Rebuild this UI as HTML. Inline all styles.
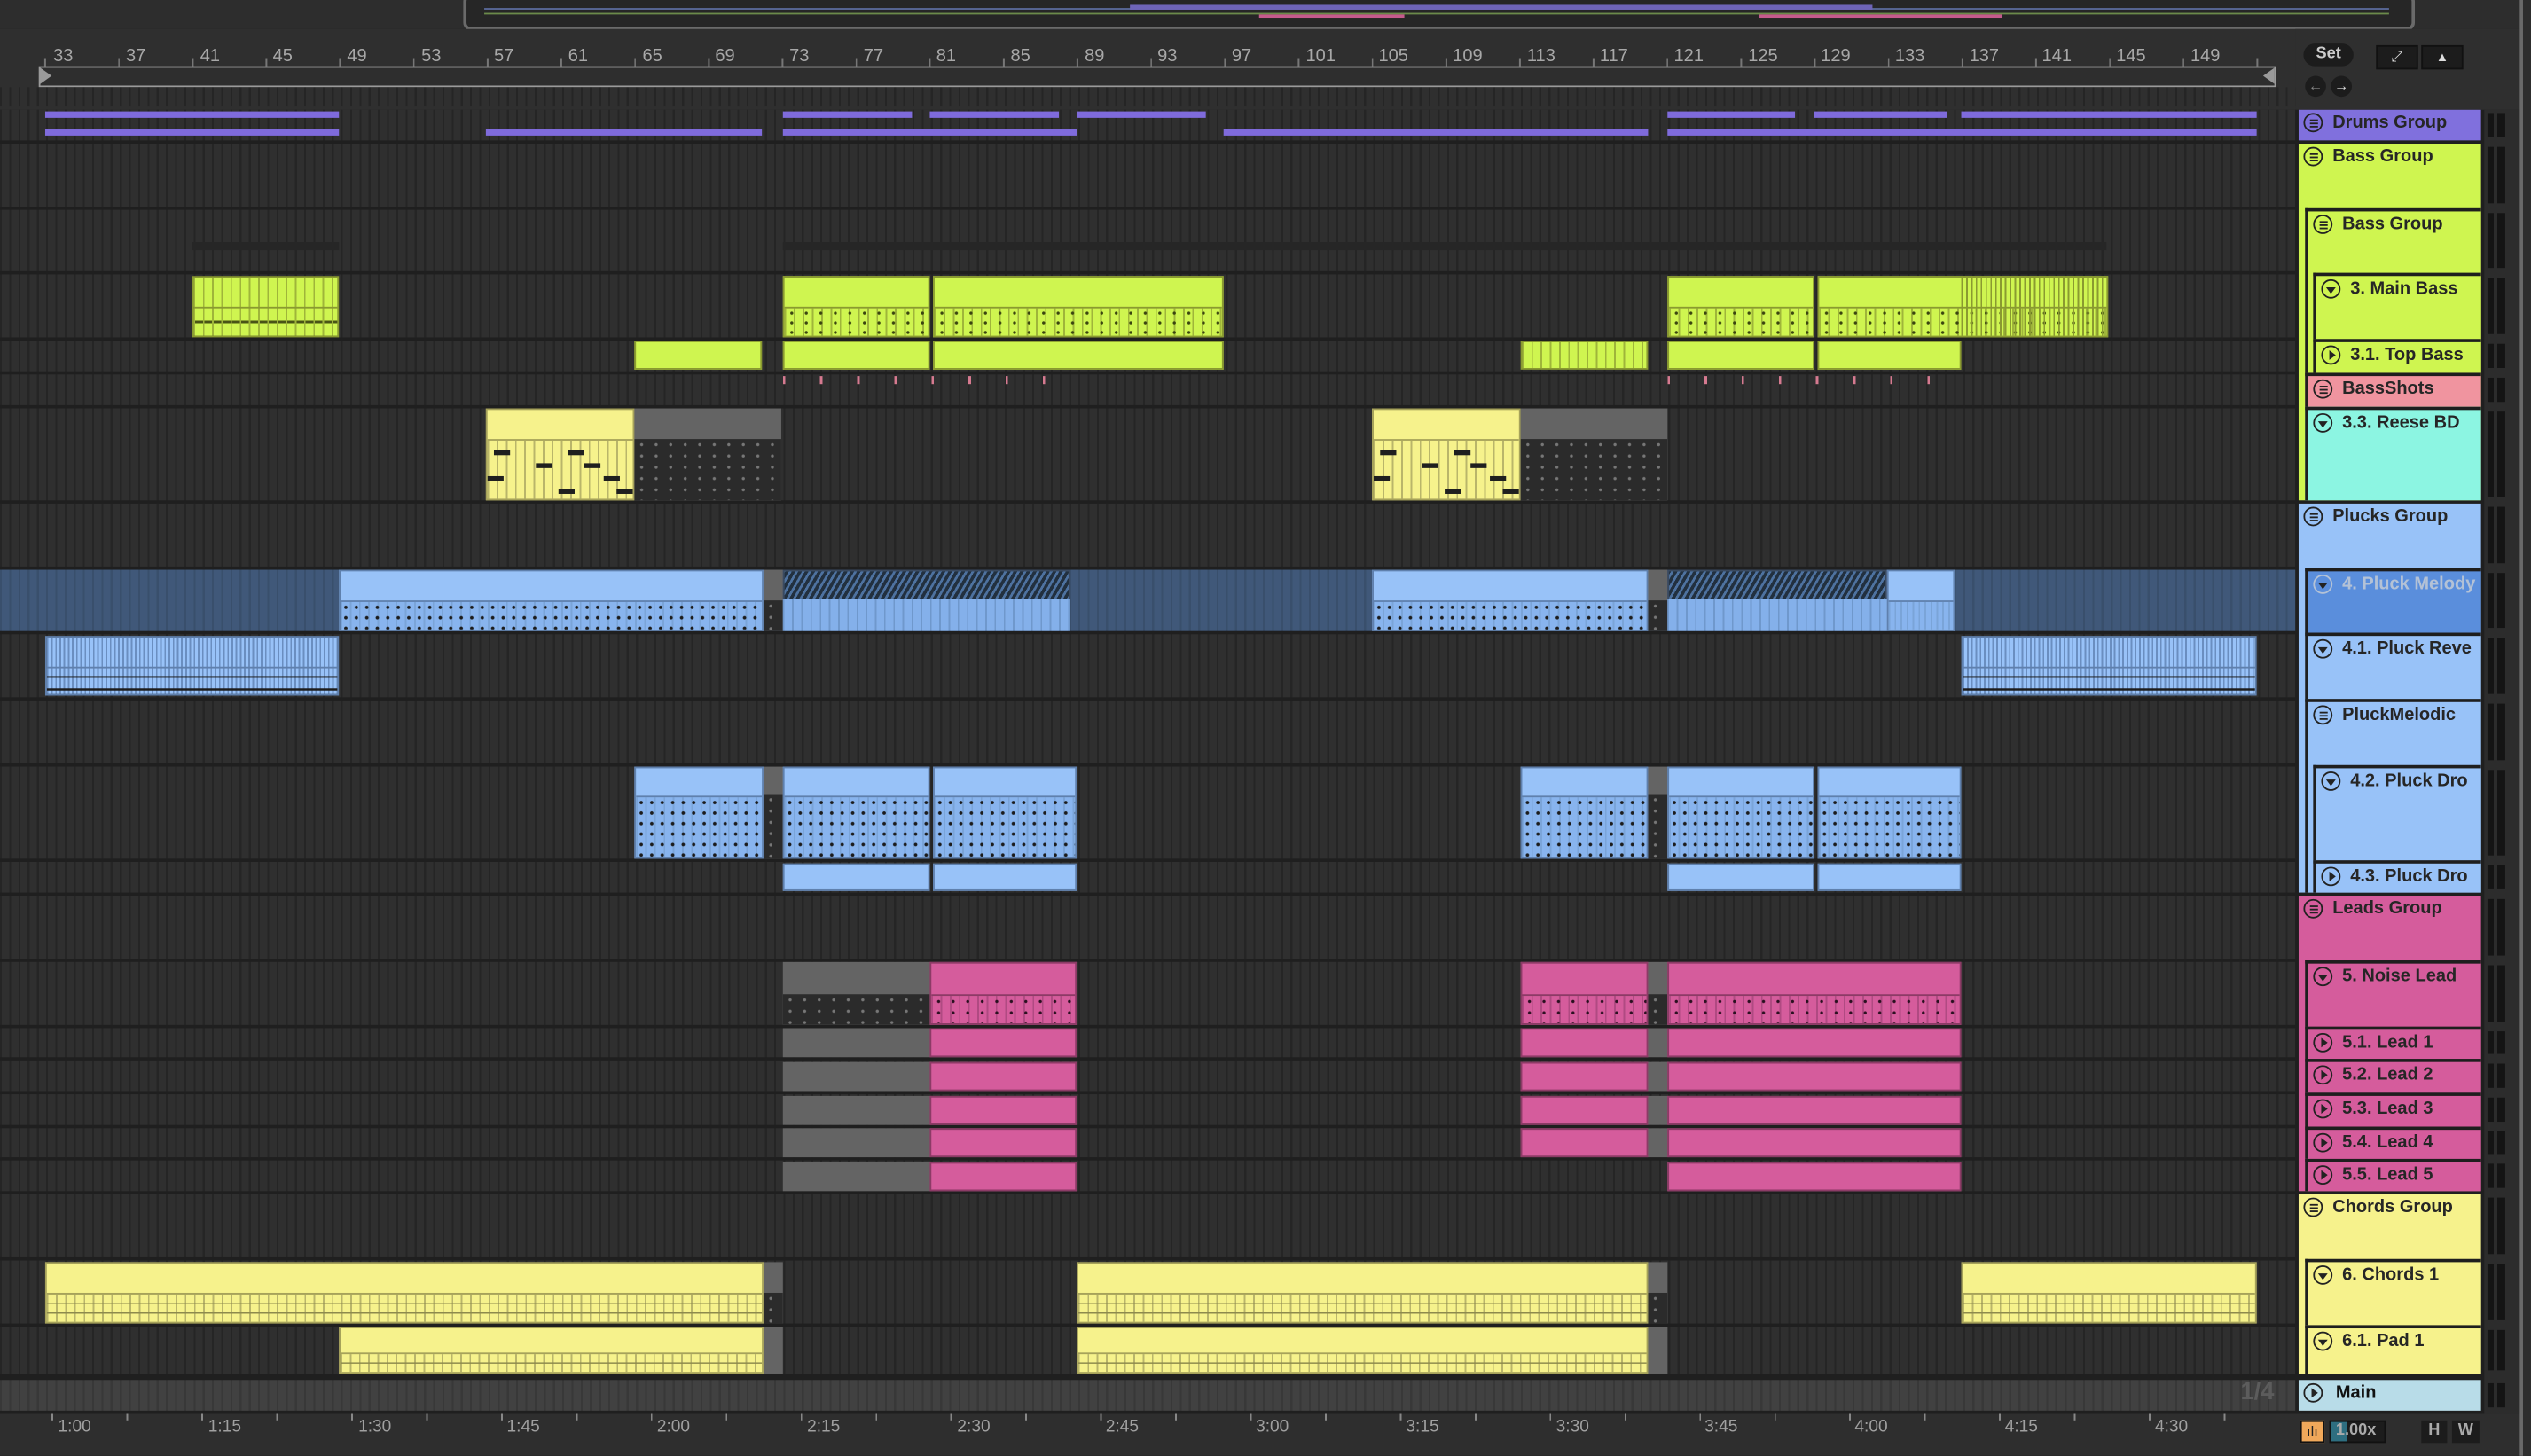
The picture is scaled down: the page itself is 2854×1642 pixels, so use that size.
<!DOCTYPE html>
<html><head><meta charset="utf-8">
<style>
html,body{margin:0;padding:0;background:#2b2b2b;overflow:hidden;width:2854px;height:1642px}
#w{position:absolute;left:0;top:0;width:1568px;height:902px;transform:scale(1.8202);transform-origin:0 0;background:#1f1f1f;font-family:"Liberation Sans",sans-serif;overflow:hidden}
.a{position:absolute}
.row{position:absolute;left:0;width:1422px;background:repeating-linear-gradient(90deg,#252525 0 1.2px,#2f2f2f 1.2px 5.71px)}
.sel{background:repeating-linear-gradient(90deg,#394f6c 0 1.2px,#405879 1.2px 5.71px)}
.c{position:absolute;box-sizing:border-box;overflow:hidden}
.c .n{position:absolute;left:0;right:0;bottom:0;top:50%}
.L{background:#cff550;border:1px solid #8a9a30}
.L .n{border-top:1px solid #8a9a30;background:radial-gradient(circle,#3a4410 0.8px,transparent 1.1px) 0 0/9px 6px,repeating-linear-gradient(90deg,#9fb53a 0 1px,transparent 1px 5.7px)}
.Y{background:#f6f28c;border:1px solid #a6a25a}
.Y .n{border-top:1px solid #a6a25a;background:repeating-linear-gradient(0deg,transparent 0 5px,#8d8a4c 5px 6px),repeating-linear-gradient(90deg,#b9b56a 0 1px,transparent 1px 5.7px)}
.B{background:#98c2f8;border:1px solid #5f80ad}
.B .n{border-top:1px solid #5f80ad;background:radial-gradient(circle,#1b1b1b 0.9px,transparent 1.2px) 0 0/6.5px 6.5px,repeating-linear-gradient(90deg,#7aa4d8 0 1px,#88b4ee 1px 5.7px)}
.B2 .n{background:repeating-linear-gradient(90deg,#7aa4d8 0 1px,#88b4ee 1px 3.7px)}
.P{background:#d55c9c;border:1px solid #8c3b66}
.P .n{border-top:1px solid #8c3b66;background:radial-gradient(circle,#2a1020 0.8px,transparent 1.1px) 0 0/9px 7px,repeating-linear-gradient(90deg,#b04a82 0 1px,transparent 1px 5.7px)}
.G{background:#646464}
.G .n{background:radial-gradient(circle,#777 0.8px,transparent 1.1px) 0 0/9px 7px,#2b2b2b}
.H{background:repeating-linear-gradient(-60deg,#22303f 0 2px,#4e72a0 2px 3.5px);border:1px solid #3a4a60}
.V{position:absolute;height:4px;background:#7f6bdc}
.rn{position:absolute;top:29px;font-size:11px;color:#a8a8a8}
.tl{position:absolute;top:878px;font-size:10.5px;color:#a0a0a0}
.hd{position:absolute;box-sizing:border-box;border-left:2px solid #1e1e1e;border-top:2px solid #1e1e1e;font-weight:bold;font-size:11px;color:#262626;padding:2px 0 0 21px;white-space:nowrap;overflow:hidden}
.hd.t{border:0}
.ic{position:absolute;left:3px;top:2px;width:12px;height:12px;border:1.2px solid #222;border-radius:50%;box-sizing:border-box}
.ic.g::after{content:"";position:absolute;left:2.5px;top:2.8px;width:5px;height:3.5px;border-top:1px solid #222;border-bottom:1px solid #222}
.ic.g::before{content:"";position:absolute;left:2.5px;top:4.5px;width:5px;height:1px;background:#222}
.ic.d::after{content:"";position:absolute;left:2px;top:3.5px;border-left:3.5px solid transparent;border-right:3.5px solid transparent;border-top:4px solid #222}
.ic.p::after{content:"";position:absolute;left:3.8px;top:2px;border-top:3.5px solid transparent;border-bottom:3.5px solid transparent;border-left:4.5px solid #222}
.m{position:absolute;left:1541px;width:11px;background:linear-gradient(90deg,#141414 0 4px,transparent 4px 6px,#141414 6px 10px)}
</style></head><body><div id="w">
<div class="a" style="left:0;top:0;width:1568px;height:18px;background:#2d2d2d"></div>
<div class="a" style="left:287px;top:-4px;width:1205px;height:19px;border:2px solid #6a6a6a;border-radius:5px;background:#262626"></div>
<div class="a" style="left:300px;top:5px;width:1180px;height:1px;background:#5a6a9a"></div>
<div class="a" style="left:300px;top:8px;width:1180px;height:1px;background:#6b8a4a"></div>
<div class="a" style="left:700px;top:3px;width:460px;height:3px;background:#6e64b8"></div>
<div class="a" style="left:780px;top:9px;width:90px;height:2px;background:#c45a8c"></div>
<div class="a" style="left:1090px;top:9px;width:150px;height:2px;background:#c45a8c"></div>
<div class="a" style="left:0;top:18px;width:1568px;height:50px;background:#2f2f2f"></div>
<div class="rn" style="left:33px">33</div><div class="rn" style="left:78px">37</div><div class="rn" style="left:124px">41</div><div class="rn" style="left:169px">45</div><div class="rn" style="left:215px">49</div><div class="rn" style="left:261px">53</div><div class="rn" style="left:306px">57</div><div class="rn" style="left:352px">61</div><div class="rn" style="left:398px">65</div><div class="rn" style="left:443px">69</div><div class="rn" style="left:489px">73</div><div class="rn" style="left:535px">77</div><div class="rn" style="left:580px">81</div><div class="rn" style="left:626px">85</div><div class="rn" style="left:672px">89</div><div class="rn" style="left:717px">93</div><div class="rn" style="left:763px">97</div><div class="rn" style="left:809px">101</div><div class="rn" style="left:854px">105</div><div class="rn" style="left:900px">109</div><div class="rn" style="left:946px">113</div><div class="rn" style="left:991px">117</div><div class="rn" style="left:1037px">121</div><div class="rn" style="left:1083px">125</div><div class="rn" style="left:1128px">129</div><div class="rn" style="left:1174px">133</div><div class="rn" style="left:1220px">137</div><div class="rn" style="left:1265px">141</div><div class="rn" style="left:1311px">145</div><div class="rn" style="left:1357px">149</div>
<div class="a" style="left:0;top:36px;width:1410px;height:5px;background:repeating-linear-gradient(90deg,transparent 0 27px,#777 27px 28px,transparent 28px 45.68px);background-position:0.5px 0"></div>
<div class="a" style="left:24px;top:41px;width:1384px;height:11px;border:1px solid #9a9a9a;background:#2e2e2e"></div>
<div class="a" style="left:25px;top:42px;border-top:5px solid transparent;border-bottom:5px solid transparent;border-left:7px solid #9a9a9a"></div>
<div class="a" style="left:1402px;top:42px;border-top:5px solid transparent;border-bottom:5px solid transparent;border-right:7px solid #9a9a9a"></div>
<div class="row" style="top:54px;height:12px"></div>
<div class="row" style="top:68px;height:19px"></div>
<div class="row" style="top:89px;height:39px"></div>
<div class="row" style="top:130px;height:38px"></div>
<div class="row" style="top:170px;height:39px"></div>
<div class="row" style="top:211px;height:19px"></div>
<div class="row" style="top:232px;height:19px"></div>
<div class="row" style="top:253px;height:57px"></div>
<div class="row" style="top:312px;height:39px"></div>
<div class="row sel" style="top:353px;height:38px"></div>
<div class="row" style="top:393px;height:39px"></div>
<div class="row" style="top:434px;height:39px"></div>
<div class="row" style="top:475px;height:57px"></div>
<div class="row" style="top:534px;height:19px"></div>
<div class="row" style="top:555px;height:39px"></div>
<div class="row" style="top:596px;height:39px"></div>
<div class="row" style="top:637px;height:18px"></div>
<div class="row" style="top:657px;height:19px"></div>
<div class="row" style="top:678px;height:19px"></div>
<div class="row" style="top:699px;height:18px"></div>
<div class="row" style="top:719px;height:19px"></div>
<div class="row" style="top:740px;height:39px"></div>
<div class="row" style="top:781px;height:39px"></div>
<div class="row" style="top:822px;height:29px"></div>
<div class="row" style="top:855px;height:19px;background:repeating-linear-gradient(90deg,#383838 0 1.2px,#414141 1.2px 5.71px)"></div>
<div class="a" style="left:1388px;top:854px;font-size:15px;font-weight:bold;color:#5c5c5c">1/4</div>
<div class="a" style="left:119px;top:150px;width:91px;height:5px;background:#262626"></div>
<div class="a" style="left:485px;top:150px;width:820px;height:5px;background:#262626"></div>
<div class="V" style="left:28px;top:69px;width:182px"></div><div class="V" style="left:485px;top:69px;width:80px"></div><div class="V" style="left:576px;top:69px;width:80px"></div><div class="V" style="left:667px;top:69px;width:80px"></div><div class="V" style="left:1033px;top:69px;width:79px"></div><div class="V" style="left:1124px;top:69px;width:82px"></div><div class="V" style="left:1215px;top:69px;width:183px"></div>
<div class="V" style="left:28px;top:80px;width:182px"></div><div class="V" style="left:301px;top:80px;width:171px"></div><div class="V" style="left:485px;top:80px;width:182px"></div><div class="V" style="left:758px;top:80px;width:263px"></div><div class="V" style="left:1033px;top:80px;width:365px"></div>
<div class="c L" style="left:119px;top:171px;width:91px;height:38px;background:repeating-linear-gradient(90deg,#9fb53a 0 1px,#cff550 1px 5.7px)"><div class="n" style="background:repeating-linear-gradient(90deg,#9fb53a 0 1px,transparent 1px 5.7px),linear-gradient(transparent 45%,#4a5416 45% 55%,transparent 55%)"></div></div>
<div class="c L" style="left:485px;top:171px;width:91px;height:38px"><div class="n"></div></div>
<div class="c L" style="left:578px;top:171px;width:180px;height:38px"><div class="n"></div></div>
<div class="c L" style="left:1033px;top:171px;width:91px;height:38px"><div class="n"></div></div>
<div class="c L" style="left:1126px;top:171px;width:180px;height:38px"><div class="n"></div></div>
<div class="a" style="left:1215px;top:172px;width:90px;height:36px;background:repeating-linear-gradient(90deg,#8a9a30 0 1px,transparent 1px 3px)"></div>
<div class="c L" style="left:393px;top:211px;width:79px;height:18px"></div>
<div class="c L" style="left:485px;top:211px;width:91px;height:18px"></div>
<div class="c L" style="left:578px;top:211px;width:180px;height:18px"></div>
<div class="c L" style="left:942px;top:211px;width:79px;height:18px;background:repeating-linear-gradient(90deg,#9fb53a 0 1px,#cff550 1px 5.7px)"></div>
<div class="c L" style="left:1033px;top:211px;width:91px;height:18px"></div>
<div class="c L" style="left:1126px;top:211px;width:89px;height:18px"></div>
<div class="a" style="left:485px;top:233px;width:180px;height:5px;background:repeating-linear-gradient(90deg,#d67a90 0 1.5px,transparent 1.5px 23px)"></div>
<div class="a" style="left:1033px;top:233px;width:170px;height:5px;background:repeating-linear-gradient(90deg,#d67a90 0 1.5px,transparent 1.5px 23px)"></div>
<div class="c Y" style="left:301px;top:253px;width:92px;height:57px"><div class="n" style="top:33%;background:linear-gradient(#1f1f1f,#1f1f1f) 4px 6px/10px 3px no-repeat,linear-gradient(#1f1f1f,#1f1f1f) 30px 14px/10px 3px no-repeat,linear-gradient(#1f1f1f,#1f1f1f) 0 22px/10px 3px no-repeat,linear-gradient(#1f1f1f,#1f1f1f) 44px 30px/10px 3px no-repeat,linear-gradient(#1f1f1f,#1f1f1f) 50px 6px/10px 3px no-repeat,linear-gradient(#1f1f1f,#1f1f1f) 60px 14px/10px 3px no-repeat,linear-gradient(#1f1f1f,#1f1f1f) 72px 22px/10px 3px no-repeat,linear-gradient(#1f1f1f,#1f1f1f) 80px 30px/10px 3px no-repeat,repeating-linear-gradient(90deg,#b9b56a 0 1px,transparent 1px 5.7px)"></div></div>
<div class="c G" style="left:393px;top:253px;width:91px;height:57px"><div class="n" style="top:33%"></div></div>
<div class="c Y" style="left:850px;top:253px;width:92px;height:57px"><div class="n" style="top:33%;background:linear-gradient(#1f1f1f,#1f1f1f) 4px 6px/10px 3px no-repeat,linear-gradient(#1f1f1f,#1f1f1f) 30px 14px/10px 3px no-repeat,linear-gradient(#1f1f1f,#1f1f1f) 0 22px/10px 3px no-repeat,linear-gradient(#1f1f1f,#1f1f1f) 44px 30px/10px 3px no-repeat,linear-gradient(#1f1f1f,#1f1f1f) 50px 6px/10px 3px no-repeat,linear-gradient(#1f1f1f,#1f1f1f) 60px 14px/10px 3px no-repeat,linear-gradient(#1f1f1f,#1f1f1f) 72px 22px/10px 3px no-repeat,linear-gradient(#1f1f1f,#1f1f1f) 80px 30px/10px 3px no-repeat,repeating-linear-gradient(90deg,#b9b56a 0 1px,transparent 1px 5.7px)"></div></div>
<div class="c G" style="left:942px;top:253px;width:91px;height:57px"><div class="n" style="top:33%"></div></div>
<div class="c B" style="left:210px;top:353px;width:263px;height:38px"><div class="n"></div></div>
<div class="c G" style="left:473px;top:353px;width:12px;height:38px"><div class="n"></div></div>
<div class="c H" style="left:485px;top:353px;width:178px;height:38px"></div>
<div class="a" style="left:485px;top:371px;width:178px;height:20px;background:repeating-linear-gradient(90deg,#6f98cc 0 1px,#84b0ea 1px 5.7px)"></div>
<div class="c B" style="left:850px;top:353px;width:171px;height:38px"><div class="n"></div></div>
<div class="c G" style="left:1021px;top:353px;width:12px;height:38px"><div class="n"></div></div>
<div class="c H" style="left:1033px;top:353px;width:136px;height:38px"></div>
<div class="a" style="left:1033px;top:371px;width:136px;height:20px;background:repeating-linear-gradient(90deg,#6f98cc 0 1px,#84b0ea 1px 5.7px)"></div>
<div class="c B B2" style="left:1169px;top:353px;width:42px;height:38px"><div class="n"></div></div>
<div class="c B" style="left:28px;top:394px;width:182px;height:37px;background:repeating-linear-gradient(90deg,#6a8ec0 0 1px,#98c2f8 1px 2.6px)"><div class="n" style="background:linear-gradient(transparent 30%,#1c1c1c 30% 38%,transparent 38% 78%,#1c1c1c 78% 86%,transparent 86%),repeating-linear-gradient(90deg,#6a8ec0 0 1px,#98c2f8 1px 2.6px)"></div></div>
<div class="c B" style="left:1215px;top:394px;width:183px;height:37px;background:repeating-linear-gradient(90deg,#6a8ec0 0 1px,#98c2f8 1px 2.6px)"><div class="n" style="background:linear-gradient(transparent 30%,#1c1c1c 30% 38%,transparent 38% 78%,#1c1c1c 78% 86%,transparent 86%),repeating-linear-gradient(90deg,#6a8ec0 0 1px,#98c2f8 1px 2.6px)"></div></div>
<div class="c B" style="left:393px;top:475px;width:80px;height:57px"><div class="n" style="top:30%"></div></div>
<div class="c G" style="left:473px;top:475px;width:12px;height:57px"><div class="n" style="top:30%"></div></div>
<div class="c B" style="left:485px;top:475px;width:91px;height:57px"><div class="n" style="top:30%"></div></div>
<div class="c B" style="left:578px;top:475px;width:89px;height:57px"><div class="n" style="top:30%"></div></div>
<div class="c B" style="left:942px;top:475px;width:79px;height:57px"><div class="n" style="top:30%"></div></div>
<div class="c G" style="left:1021px;top:475px;width:12px;height:57px"><div class="n" style="top:30%"></div></div>
<div class="c B" style="left:1033px;top:475px;width:91px;height:57px"><div class="n" style="top:30%"></div></div>
<div class="c B" style="left:1126px;top:475px;width:89px;height:57px"><div class="n" style="top:30%"></div></div>
<div class="c B" style="left:485px;top:535px;width:91px;height:17px"></div>
<div class="c B" style="left:578px;top:535px;width:89px;height:17px"></div>
<div class="c B" style="left:1033px;top:535px;width:91px;height:17px"></div>
<div class="c B" style="left:1126px;top:535px;width:89px;height:17px"></div>
<div class="c G" style="left:485px;top:596px;width:91px;height:39px"><div class="n"></div></div>
<div class="c P" style="left:576px;top:596px;width:91px;height:39px"><div class="n"></div></div>
<div class="c P" style="left:942px;top:596px;width:79px;height:39px"><div class="n"></div></div>
<div class="c G" style="left:1021px;top:596px;width:12px;height:39px"><div class="n"></div></div>
<div class="c P" style="left:1033px;top:596px;width:182px;height:39px"><div class="n"></div></div>
<div class="c G" style="left:485px;top:637px;width:91px;height:18px"></div><div class="c P" style="left:576px;top:637px;width:91px;height:18px"></div><div class="c P" style="left:942px;top:637px;width:79px;height:18px"></div><div class="c G" style="left:1021px;top:637px;width:12px;height:18px"></div><div class="c P" style="left:1033px;top:637px;width:182px;height:18px"></div>
<div class="c G" style="left:485px;top:658px;width:91px;height:18px"></div><div class="c P" style="left:576px;top:658px;width:91px;height:18px"></div><div class="c P" style="left:942px;top:658px;width:79px;height:18px"></div><div class="c G" style="left:1021px;top:658px;width:12px;height:18px"></div><div class="c P" style="left:1033px;top:658px;width:182px;height:18px"></div>
<div class="c G" style="left:485px;top:679px;width:91px;height:18px"></div><div class="c P" style="left:576px;top:679px;width:91px;height:18px"></div><div class="c P" style="left:942px;top:679px;width:79px;height:18px"></div><div class="c G" style="left:1021px;top:679px;width:12px;height:18px"></div><div class="c P" style="left:1033px;top:679px;width:182px;height:18px"></div>
<div class="c G" style="left:485px;top:699px;width:91px;height:18px"></div><div class="c P" style="left:576px;top:699px;width:91px;height:18px"></div><div class="c P" style="left:942px;top:699px;width:79px;height:18px"></div><div class="c G" style="left:1021px;top:699px;width:12px;height:18px"></div><div class="c P" style="left:1033px;top:699px;width:182px;height:18px"></div>
<div class="c G" style="left:485px;top:720px;width:91px;height:18px"></div><div class="c P" style="left:576px;top:720px;width:91px;height:18px"></div><div class="c P" style="left:1033px;top:720px;width:182px;height:18px"></div>
<div class="c Y" style="left:28px;top:782px;width:445px;height:38px"><div class="n"></div></div>
<div class="c G" style="left:473px;top:782px;width:12px;height:38px"><div class="n"></div></div>
<div class="c Y" style="left:667px;top:782px;width:354px;height:38px"><div class="n"></div></div>
<div class="c G" style="left:1021px;top:782px;width:12px;height:38px"><div class="n"></div></div>
<div class="c Y" style="left:1215px;top:782px;width:183px;height:38px"><div class="n"></div></div>
<div class="c Y" style="left:210px;top:822px;width:263px;height:29px"><div class="n" style="top:55%"></div></div>
<div class="c G" style="left:473px;top:822px;width:12px;height:29px"></div>
<div class="c Y" style="left:667px;top:822px;width:354px;height:29px"><div class="n" style="top:55%"></div></div>
<div class="c G" style="left:1021px;top:822px;width:12px;height:29px"></div>
<div class="a" style="left:0;top:876px;width:1568px;height:26px;background:#2e2e2e"></div>
<div class="a" style="left:0;top:876px;width:1420px;height:4px;background:repeating-linear-gradient(90deg,transparent 0 32px,#888 32px 33px,transparent 33px 46.4px)"></div>
<div class="tl" style="left:36px">1:00</div><div class="tl" style="left:129px">1:15</div><div class="tl" style="left:222px">1:30</div><div class="tl" style="left:314px">1:45</div><div class="tl" style="left:407px">2:00</div><div class="tl" style="left:500px">2:15</div><div class="tl" style="left:593px">2:30</div><div class="tl" style="left:685px">2:45</div><div class="tl" style="left:778px">3:00</div><div class="tl" style="left:871px">3:15</div><div class="tl" style="left:964px">3:30</div><div class="tl" style="left:1056px">3:45</div><div class="tl" style="left:1149px">4:00</div><div class="tl" style="left:1242px">4:15</div><div class="tl" style="left:1335px">4:30</div>
<div class="a" style="left:1422px;top:18px;width:146px;height:50px;background:#2f2f2f"></div>
<div class="a" style="left:1422px;top:68px;width:118px;height:808px;background:#1f1f1f"></div>
<div class="a" style="left:1539px;top:68px;width:22px;height:808px;background:#2c2c2c"></div>
<div class="a" style="left:1561px;top:0;width:7px;height:902px;background:#2e2e2e;border-left:2px solid #6a6a6a;box-sizing:border-box"></div>
<div class="a" style="left:1427px;top:27px;width:31px;height:14px;border-radius:8px;background:#1c1c1c;color:#ccc;font-size:10px;font-weight:bold;text-align:center;line-height:14px">Set</div>
<div class="a" style="left:1472px;top:28px;width:24px;height:13px;background:#1c1c1c;border:1px solid #111;color:#ddd;font-size:9px;text-align:center;line-height:13px">⤢</div>
<div class="a" style="left:1500px;top:28px;width:24px;height:13px;background:#1c1c1c;border:1px solid #111;color:#ddd;font-size:8px;text-align:center;line-height:13px">▲</div>
<div class="a" style="left:1428px;top:47px;width:13px;height:13px;border-radius:50%;background:#1c1c1c;color:#888;font-size:9px;text-align:center;line-height:13px">←</div>
<div class="a" style="left:1444px;top:47px;width:13px;height:13px;border-radius:50%;background:#1c1c1c;color:#ddd;font-size:9px;text-align:center;line-height:13px">→</div>
<div class="hd t" style="left:1424px;top:68px;width:113px;height:19px;background:#8070dd"><span class="ic g"></span>Drums Group</div>
<div class="hd t" style="left:1424px;top:89px;width:113px;height:221px;background:#cff550"><span class="ic g"></span>Bass Group</div>
<div class="hd" style="left:1428px;top:129px;width:109px;height:102px;background:#cff550"><span class="ic g"></span>Bass Group</div>
<div class="hd" style="left:1433px;top:169px;width:104px;height:41px;background:#cff550"><span class="ic d"></span>3. Main Bass</div>
<div class="hd" style="left:1433px;top:210px;width:104px;height:21px;background:#cff550"><span class="ic p"></span>3.1. Top Bass</div>
<div class="hd" style="left:1428px;top:231px;width:109px;height:21px;background:#f0949f"><span class="ic g"></span>BassShots</div>
<div class="hd" style="left:1428px;top:252px;width:109px;height:58px;background:#8cf5e2"><span class="ic d"></span>3.3. Reese BD</div>
<div class="hd t" style="left:1424px;top:312px;width:113px;height:241px;background:#98c2f8"><span class="ic g"></span>Plucks Group</div>
<div class="hd" style="left:1428px;top:352px;width:109px;height:40px;background:#5a8edc;color:#b4c2d6"><span class="ic d" style="border-color:#b4c2d6"></span>4. Pluck Melody</div>
<div class="hd" style="left:1428px;top:392px;width:109px;height:41px;background:#98c2f8"><span class="ic d"></span>4.1. Pluck Reve</div>
<div class="hd" style="left:1428px;top:433px;width:109px;height:120px;background:#98c2f8"><span class="ic g"></span>PluckMelodic</div>
<div class="hd" style="left:1433px;top:474px;width:104px;height:59px;background:#98c2f8"><span class="ic d"></span>4.2. Pluck Dro</div>
<div class="hd" style="left:1433px;top:533px;width:104px;height:20px;background:#98c2f8"><span class="ic p"></span>4.3. Pluck Dro</div>
<div class="hd t" style="left:1424px;top:555px;width:113px;height:183px;background:#d55c9c"><span class="ic g"></span>Leads Group</div>
<div class="hd" style="left:1428px;top:595px;width:109px;height:41px;background:#d55c9c"><span class="ic d"></span>5. Noise Lead</div>
<div class="hd" style="left:1428px;top:636px;width:109px;height:20px;background:#d55c9c"><span class="ic p"></span>5.1. Lead 1</div>
<div class="hd" style="left:1428px;top:656px;width:109px;height:21px;background:#d55c9c"><span class="ic p"></span>5.2. Lead 2</div>
<div class="hd" style="left:1428px;top:677px;width:109px;height:21px;background:#d55c9c"><span class="ic p"></span>5.3. Lead 3</div>
<div class="hd" style="left:1428px;top:698px;width:109px;height:20px;background:#d55c9c"><span class="ic p"></span>5.4. Lead 4</div>
<div class="hd" style="left:1428px;top:718px;width:109px;height:20px;background:#d55c9c"><span class="ic p"></span>5.5. Lead 5</div>
<div class="hd t" style="left:1424px;top:740px;width:113px;height:111px;background:#f6f28c"><span class="ic g"></span>Chords Group</div>
<div class="hd" style="left:1428px;top:780px;width:109px;height:41px;background:#f6f28c"><span class="ic d"></span>6. Chords 1</div>
<div class="hd" style="left:1428px;top:821px;width:109px;height:30px;background:#f6f28c"><span class="ic d"></span>6.1. Pad 1</div>
<div class="hd t" style="left:1424px;top:855px;width:113px;height:19px;background:#b8dce8;color:#111;padding-left:23px"><span class="ic p"></span>Main</div>
<div class="m" style="top:70px;height:15px"></div><div class="m" style="top:91px;height:35px"></div><div class="m" style="top:132px;height:34px"></div><div class="m" style="top:172px;height:35px"></div><div class="m" style="top:213px;height:15px"></div><div class="m" style="top:234px;height:15px"></div><div class="m" style="top:255px;height:53px"></div><div class="m" style="top:314px;height:35px"></div><div class="m" style="top:355px;height:34px"></div><div class="m" style="top:395px;height:35px"></div><div class="m" style="top:436px;height:35px"></div><div class="m" style="top:477px;height:53px"></div><div class="m" style="top:536px;height:15px"></div><div class="m" style="top:557px;height:35px"></div><div class="m" style="top:598px;height:35px"></div><div class="m" style="top:639px;height:14px"></div><div class="m" style="top:659px;height:15px"></div><div class="m" style="top:680px;height:15px"></div><div class="m" style="top:701px;height:14px"></div><div class="m" style="top:721px;height:15px"></div><div class="m" style="top:742px;height:35px"></div><div class="m" style="top:783px;height:35px"></div><div class="m" style="top:824px;height:25px"></div><div class="m" style="top:857px;height:15px"></div>
<div class="a" style="left:1425px;top:880px;width:15px;height:14px;background:#f0a85a;border:1px solid #111;box-sizing:border-box;color:#222;font-size:9px;text-align:center;line-height:12px">ılı</div>
<div class="a" style="left:1443px;top:880px;width:35px;height:14px;background:#1c1c1c;border:1px solid #111;box-sizing:border-box"><div class="a" style="left:0;top:0;width:10px;height:12px;background:#2e6e80"></div><span class="a" style="left:3px;top:0;color:#aaa;font-size:10px;font-weight:bold">1.00x</span></div>
<div class="a" style="left:1500px;top:880px;width:16px;height:14px;background:#1c1c1c;color:#aaa;font-size:10px;font-weight:bold;text-align:center;line-height:14px">H</div>
<div class="a" style="left:1519px;top:880px;width:17px;height:14px;background:#1c1c1c;color:#aaa;font-size:10px;font-weight:bold;text-align:center;line-height:14px">W</div>
</div></body></html>
